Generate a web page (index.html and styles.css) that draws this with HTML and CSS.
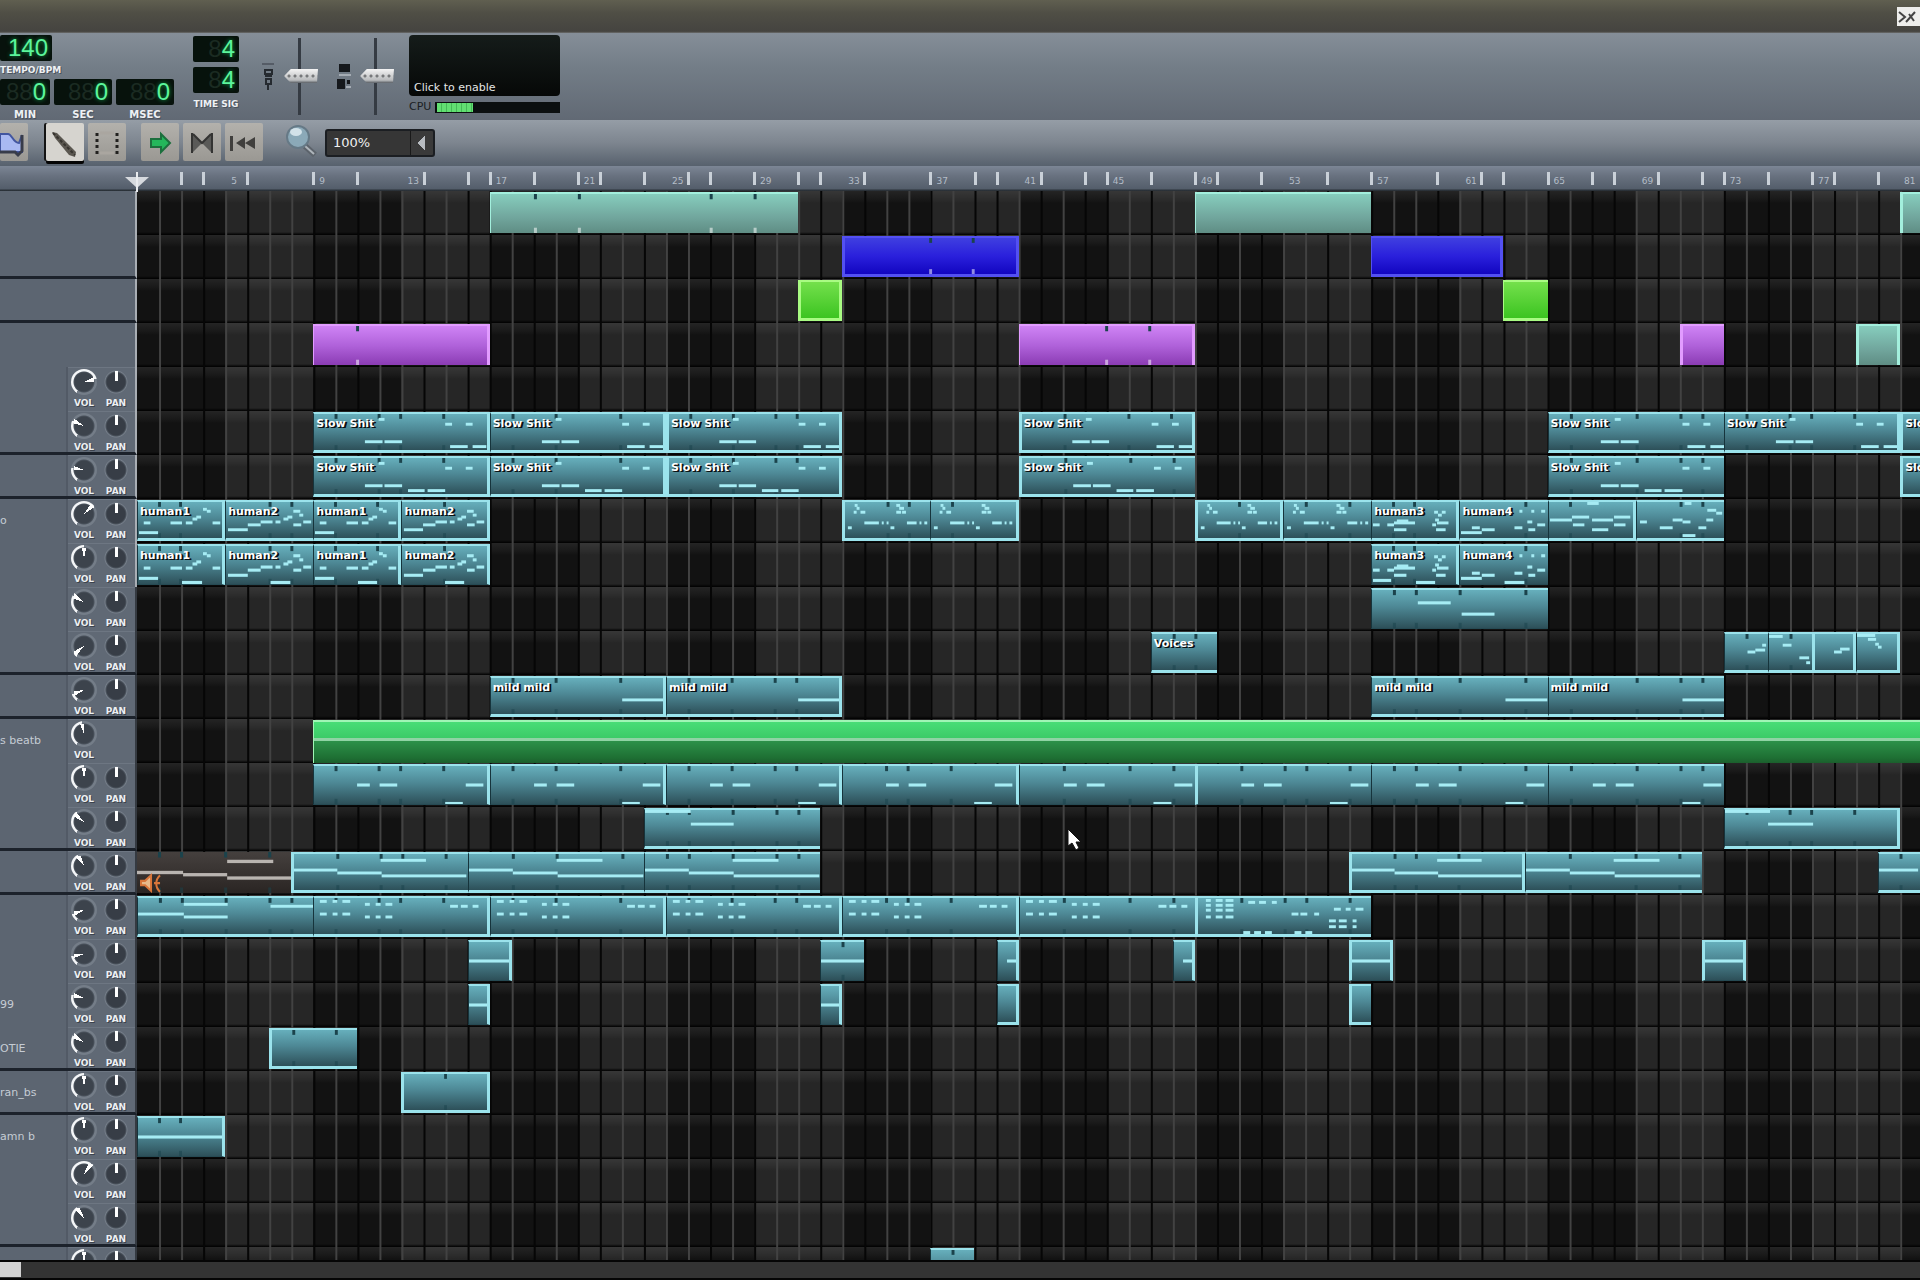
FILE: index.html
```html
<!DOCTYPE html>
<html lang="en">
<head>
<meta charset="utf-8">
<title>Song Editor</title>
<link rel="stylesheet" href="styles.css">
</head>
<body>
<header class="titlebar"><button class="close" aria-label="Close window"><svg width="20" height="14" viewBox="0 0 20 14"><path d="M2 2l6 5-6 5M18 2L9 12M12 4l5 7" fill="none" stroke="#444" stroke-width="2"/></svg></button></header>

<section class="transport" aria-label="Transport">
  <div class="clock">
    <div class="lcd lcd-tempo">140</div>
    <div class="caption caption-tempo">TEMPO/BPM</div>
    <div class="times">
      <div class="time first"><div class="lcd"><i>88</i>0</div><div class="caption">MIN</div></div>
      <div class="time"><div class="lcd"><i>88</i>0</div><div class="caption">SEC</div></div>
      <div class="time"><div class="lcd"><i>88</i>0</div><div class="caption">MSEC</div></div>
    </div>
  </div>
  <div class="signature">
    <div class="lcd"><i>8</i>4</div>
    <div class="lcd"><i>8</i>4</div>
    <div class="caption">TIME SIG</div>
  </div>
  <div class="fader">
    <svg width="20" height="30" viewBox="0 0 20 30"><path d="M3 2h12" stroke="#555c66" stroke-width="2"/><path d="M6 8h7v4H6zM6 14h7M7 17h5v5H7zM9 22v6" fill="none" stroke="#252a30" stroke-width="2"/></svg>
    <input type="range" aria-label="Master volume" value="51">
  </div>
  <div class="fader">
    <svg width="20" height="30" viewBox="0 0 20 30"><path d="M4 2h11v8H4zM2 17h8v10H2zM12 18h3v4h-3z" fill="#15181c"/><path d="M4 13h12M11 25h5" stroke="#a5acb4" stroke-width="2"/></svg>
    <input type="range" aria-label="Master pitch" value="51">
  </div>
  <div class="monitor">
    <button class="scope">Click to enable</button>
    <div class="cpu"><span>CPU</span><div class="load"><b></b></div></div>
  </div>
</section>

<nav class="toolbar" aria-label="Song tools">
  <button class="cut" aria-label="Add automation track"><svg width="28" height="38" viewBox="0 0 28 38"><path d="M0 11h8c4 0 5 9 11 9l3-8v17H0z" fill="#a9b9f2" stroke="#4256a0" stroke-width="2"/><path d="M0 29h15l3 3 4-4V12" fill="none" stroke="#383c4a" stroke-width="3"/></svg></button>
  <div class="group modes">
    <button class="active" aria-label="Draw mode"><svg width="38" height="38" viewBox="0 0 38 38"><path d="M6 9l5 1 19 19-1 5-6-2L9 15z" fill="#5b5750"/><path d="M7 10l22 22" stroke="#37342f" stroke-width="2" stroke-dasharray="3 2"/></svg></button>
    <button aria-label="Edit mode"><svg width="38" height="38" viewBox="0 0 38 38"><path d="M9 10v24M29 10v24" stroke="#22211f" stroke-width="3" stroke-dasharray="3 3"/><path d="M12 10h14M12 30h14" stroke="#aaa6a0" stroke-width="3"/></svg></button>
  </div>
  <div class="group">
    <button aria-label="Auto scrolling"><svg width="38" height="38" viewBox="0 0 38 38"><path d="M10 16h10v-5l9 9-9 9v-5H10z" fill="#24b75b" stroke="#1c6f3d" stroke-width="2"/></svg></button>
    <button aria-label="Loop points"><svg width="38" height="38" viewBox="0 0 38 38"><path d="M9 10l10 10-10 10zM29 10L19 20l10 10z" fill="#5a5a58"/><path d="M9 10v20M29 10v20M10 11l9 9 9-9" fill="none" stroke="#343433" stroke-width="2"/></svg></button>
    <button aria-label="Back to zero"><svg width="38" height="38" viewBox="0 0 38 38"><path d="M5 13h3v15H5zM11 20l9-6v12zM20 20l10-6v12z" fill="#403f3d"/></svg></button>
  </div>
  <label class="zoom"><svg width="36" height="36" viewBox="0 0 36 36"><path d="M22 23l10 9" stroke="#5c636b" stroke-width="6"/><path d="M22 23l9 8" stroke="#aeb5bb" stroke-width="2"/><circle cx="15" cy="14" r="11" fill="#8ba9b8" stroke="#667986" stroke-width="2"/><ellipse cx="13" cy="9" rx="6" ry="4" fill="#d3e2e9"/></svg>
    <select aria-label="Zoom"><option>100%</option></select></label>
</nav>

<main class="song">
  <div class="rulerbar"><div class="corner"></div><div class="ruler" id="ruler"></div></div>
  <div class="tracks" id="tracks"></div>
</main>
<footer class="scrollbar"><div class="thumb"></div></footer>
<script src="song.js"></script>
</body>
</html>
```
FILE: styles.css
```css
* { box-sizing: border-box; }
body {
  margin: 0; height: 100vh; display: flex; flex-direction: column; overflow: hidden;
  background: #080808; color: #e6eaee; font: 10px/12px "DejaVu Sans", sans-serif;
}
button { border: 0; padding: 0; font: inherit; }
.titlebar {
  flex: none; height: 33px; display: flex; justify-content: flex-end; align-items: center;
  background: linear-gradient(#605f50, #4f4e45 40%, #454440 95%, #6d6e6e);
}
.close { width: 23px; height: 19px; background: #eeeeec; display: flex; align-items: center; }

/* transport */
.transport {
  flex: none; height: 87px; display: flex; align-items: flex-start;
  background: linear-gradient(#858e98, #737d87 40%, #616974);
}
.lcd {
  background: #07120c; color: #5cf59b; text-shadow: 0 0 4px #12a54e;
  font: 24px/26px "Liberation Sans", sans-serif; text-align: right; padding: 0 4px;
  height: 26px; border-radius: 2px; white-space: nowrap;
}
.lcd i { font-style: normal; color: #1b2b22; text-shadow: none; }
.caption { font: bold 10px/12px "DejaVu Sans", sans-serif; color: #eef1f4; text-align: center; text-shadow: 1px 1px #4a525c; }
.clock { width: 174px; padding-top: 2px; }
.lcd-tempo { width: 52px; }
.caption-tempo { text-align: left; font-size: 9px; margin: 3px 0; }
.times { display: flex; gap: 4px; }
.time { width: 58px; }
.time.first { width: 50px; }
.time .caption { margin-top: 4px; }
.signature { width: 46px; margin: 3px 20px 0 19px; display: grid; gap: 5px; }
.signature .caption { font-size: 9px; margin: 0 -4px; white-space: nowrap; }
.fader { width: 76px; display: flex; align-items: center; gap: 5px; padding-top: 5px; }
.fader input {
  appearance: none; writing-mode: vertical-lr; direction: rtl; width: 34px; height: 77px; margin: 0;
  background: linear-gradient(90deg, transparent 14px, #353b43 14px 17px, transparent 17px);
}
.fader input::-webkit-slider-thumb {
  appearance: none; width: 34px; height: 14px; border: 0;
  background: radial-gradient(circle, #77797b 1px, transparent 2px) 8px 2px / 6px 10px, linear-gradient(#f4f4f4, #b9bbbd 80%, #595e64);
  clip-path: polygon(0 50%, 20% 0, 100% 0, 97% 100%, 20% 100%);
}
.monitor { width: 151px; padding-top: 2px; margin-left: -2px; }
.scope {
  display: block; width: 100%; height: 61px; padding: 44px 0 0 5px; text-align: left; color: #e4e6e6;
  background: linear-gradient(#151c1a, #060807); border-radius: 4px; font: 11px/14px "DejaVu Sans", sans-serif;
}
.cpu { display: flex; align-items: center; gap: 4px; margin-top: 5px; color: #1a1e23; font: 11px/12px "DejaVu Sans", sans-serif; }
.load { flex: 1; height: 11px; background: #0b0f10; padding: 1px 2px; }
.load b { display: block; width: 36px; height: 9px; background: repeating-linear-gradient(90deg, #62df72 0 4px, #46b958 4px 5px); }

/* song tools */
.toolbar {
  flex: none; height: 46px; padding-top: 3px; display: flex; align-items: flex-start;
  background: linear-gradient(#959da6, #7d858f 50%, #57616d);
}
.toolbar button { width: 38px; height: 38px; background: linear-gradient(#b3b1ac, #9a9893); border-radius: 2px; display: block; }
.toolbar .cut { width: 28px; }
.group { display: flex; gap: 4px; margin-left: 15px; }
.modes { margin-left: 18px; }
.toolbar .active { background: #d6d4cf; box-shadow: -2px 0 #141414, 0 3px #050505; }
.zoom { display: flex; align-items: center; gap: 6px; margin-left: 20px; }
.zoom select {
  appearance: none; width: 110px; height: 28px; padding: 0 6px; border: 2px solid #1b1e22; border-radius: 3px; margin-top: 3px;
  color: #f0f0f0; font: 13px/18px "DejaVu Sans", sans-serif;
  background: linear-gradient(to bottom right, transparent 50%, #b7bbc0 50%) 90px 5px / 8px 7px no-repeat,
    linear-gradient(to top right, transparent 50%, #b7bbc0 50%) 90px 12px / 8px 7px no-repeat,
    linear-gradient(90deg, #363636 0 83px, #191919 83px 84px, #3a3a3a 84px);
}

/* arrangement */
.song { flex: 1; min-height: 0; display: flex; flex-direction: column; overflow: hidden; }
.rulerbar { flex: none; height: 25px; display: flex; background: linear-gradient(#7c8695, #68717f 40%, #545e6b 90%, #20262c); }
.corner { flex: none; width: 137px; }
.ruler { flex: 1; position: relative; }
.tick { position: absolute; top: 6px; width: 3px; height: 13px; margin-left: -1px; background: #c9d0d8; }
.bar { position: absolute; top: 9px; padding-left: 6px; font: 9px/12px "DejaVu Sans", sans-serif; color: #b4bdc8; }
.playhead { position: absolute; left: -12px; top: 6px; z-index: 2; }
.tracks { flex: 1; min-height: 0; position: relative; overflow: hidden; }
.track { height: 44px; display: flex; }
.head { flex: none; width: 137px; height: 44px; display: flex; background: #5c6571; border-right: 2px solid #353a41; overflow: hidden; }
.lit .head { border-right-color: #a9aeb4; }
.last .head { border-bottom: 3px solid #1c222b; }
.name { width: 66px; padding-top: 15px; color: #c5ccd4; font: 11px/14px "DejaVu Sans", sans-serif; white-space: nowrap; overflow: hidden; }
.knobs { flex: 1; border-left: 2px solid #525a66; padding: 2px 0 0 3px; display: flex; gap: 6px; background: #606975; box-shadow: inset 0 1px #6d7682; }
.knob { width: 26px; height: 42px; color: #eceff2; font: bold 9px/12px "DejaVu Sans", sans-serif; text-align: center; text-shadow: 1px 1px #3b424c; }
.knob input {
  appearance: none; display: block; width: 26px; height: 26px; margin: 0 0 2px; border-radius: 50%;
  background:
    conic-gradient(from calc(var(--turn) - 12deg), #fff 24deg, transparent 24deg) center / 20px 20px no-repeat,
    radial-gradient(circle, #3c434c 9px, #4a525c 10px, transparent 11px),
    conic-gradient(from 215deg, #f4f6f8 var(--arc), transparent 0),
    #747d88;
}
.knob input::-webkit-slider-thumb { appearance: none; width: 0; height: 0; }
.knob.pan input { background:
    linear-gradient(#fff, #fff) 12px 2px / 3px 10px no-repeat,
    radial-gradient(circle, #373d46 9px, #4a525c 10px, #757e89 11px, transparent 12px); }
.lane {
  flex: 1; position: relative;
  background:
    linear-gradient(#ffffff14, #ffffff08 8px, transparent 12px, transparent 41px, #000 44px),
    repeating-linear-gradient(90deg, #121212 0 calc(400% / 80.9), #262626 calc(400% / 80.9) calc(800% / 80.9));
}
.grid { position: absolute; left: 137px; top: 0; width: calc(100% - 137px); height: 100%; pointer-events: none; }
.clip {
  position: absolute; z-index: 1; top: 1px; height: 41px; overflow: hidden;
  border: solid #9be3ec; border-width: 2px 0 3px; border-left: 1px solid #16343c;
  background: linear-gradient(#66afbc, #4d8794 45%, #2d5059);
}
.clip.edge { border-right: 3px solid #9be3ec; }
.clip.start { border-left: 3px solid #9be3ec; }
.clip.open { border-bottom: 1px solid #264a53; }
.clip svg { position: absolute; left: 0; top: 0; width: 100%; height: 100%; }
.clip span {
  position: relative; display: block; padding: 3px 0 0 2px; white-space: nowrap; color: #fff;
  font: bold 11px/14px "DejaVu Sans", sans-serif; text-shadow: 1px 1px #0a1114, 2px 1px #0a1114;
}
.clip.mint { background: linear-gradient(#86cdbd, #71a69d 60%, #5f8d84); border-color: #a3efdd; border-bottom-width: 0; }
.clip.blue { background: linear-gradient(#3f3fe0, #2a20dc 50%, #1205c0); border-color: #5350f2; }
.clip.lime { background: linear-gradient(#74e04c, #3cc421); border-color: #a9fb83; }
.clip.purple { background: linear-gradient(#cf83f5, #b062da 50%, #8b3cb4); border-color: #e29cff; border-bottom-width: 0; }
.clip.green { top: 1px; height: 43px; background: linear-gradient(#49dd77, #3bcb67 16px, #8fd3a4 16px 19px, #2c9149 19px, #1e6f33 36px, #1b5f2d); border-color: #a1f5b6; border-bottom: 0; }
.clip.muted { background: linear-gradient(#45403e, #2a2523); border: 0; }
.cursor { position: absolute; z-index: 3; }

.scrollbar { flex: none; height: 20px; background: #333; border: solid #050505; border-width: 2px 0; }
.thumb { width: 21px; height: 15px; background: #d2d2d2; }
```
FILE: song.js
```js
// Number of bars that fit across the lanes.
const BARS = 80.9;
const BAR_PX = 22;
const LIGHT = [1,2,4,6,7,9,11,12,14,17,19,22,24,25,27,29,30,32,34,35,37,40,42,45,47,48,50,52,53,55,57,58,60,63,65,68,70,71,73,75,76,78,80];
const TICKS = [2,3,5,8,10,13,15,16,18,20,21,23,25,26,28,30,31,33,36,38,39,41,43,44,46,48,49,51,54,56,59,61,62,64,66,67,69,71,72,74,76,77,79];
const pct = bars => (bars / BARS * 100).toFixed(3) + '%';

// Notes are [x, width, y] inside the clip.
const SLOW = [[66,6,4],[52,18,27],[72,18,27],[134,7,9],[155,7,9]];
const SLOW_A = [...SLOW,[139,18,32],[162,14,32]];
const SLOW_B = [...SLOW,[96,17,32],[116,18,32]];
const H1 = [[1,20,30],[6,7,20],[34,12,20],[50,7,20],[78,8,20],[57,5,16],[61,5,14],[68,4,6],[72,4,8]];
const H2 = [[2,20,27],[22,13,22],[35,12,19],[50,5,19],[58,5,16],[62,5,14],[68,7,8],[74,4,12],[68,8,22],[78,8,19]];
const H3 = [[1,7,22],[16,7,22],[23,22,20],[26,12,18],[23,13,27],[65,4,9],[69,4,12],[73,4,9],[63,4,22],[68,12,20],[66,4,17],[67,10,27]];
const H4 = [[1,21,30],[12,8,25],[22,13,27],[55,8,25],[68,5,19],[69,7,27],[78,8,22],[60,3,8],[72,3,8],[82,4,8]];
const DOTS = [[9,3,9],[16,5,9],[12,3,5],[10,3,2],[20,15,20],[38,2,20],[43,2,20],[47,4,25],[53,5,9],[59,4,9],[56,5,5],[53,4,2],[64,10,20],[77,2,20],[82,3,20],[3,4,25]];
const BEND = [[0,44,15],[44,45,18],[89,86,21],[88,46,5]];
const BASS = [[44,13,17],[67,18,17],[155,18,17],[134,18,35]];
const CHOP = [];
for (const y of [2,15]) CHOP.push([6,7,y],[19,5,y],[29,8,y]);
for (const y of [5,18]) CHOP.push([52,5,y],[63,5,y],[73,7,y]);
CHOP.push([139,8,7],[150,7,7],[162,6,7]);
const FILL = [];
for (const y of [1,6,11,18]) FILL.push([8,5,y],[18,7,y],[28,8,y]);
FILL.push([51,7,3],[62,7,3],[75,5,3],[95,7,15],[104,7,15],[118,5,15],[138,7,10],[150,5,10],[160,8,10]);
for (const y of [22,28]) FILL.push([133,7,y],[143,8,y],[157,4,y]);
for (const x of [46,57,68,98,109]) FILL.push([x,7,34]);
const MID = [[0,400,17]];

const S = 'Slow Shit';
// Clips are [start, end, classes, name, notes], one list for each track.
const tracks = [
  { clips: [[16,30,'mint','',[]],[48,56,'mint','',[]],[80,84,'mint start','',[]]] },
  { last: 1, clips: [[32,40,'blue start edge','',[]],[56,62,'blue edge','',[]]] },
  { last: 1, clips: [[30,32,'lime start edge','',[]],[62,64,'lime','',[]]] },
  { clips: [[8,16,'purple edge','',[]],[40,48,'purple edge','',[]],[70,72,'purple start','',[]],[78,80,'mint start edge','',[]]] },
  { knob: 75, clips: [] },
  { knob: -65, last: 1, clips: [[8,16,'edge',S,SLOW_A],[16,24,'edge',S,SLOW_A],[24,32,'start edge',S,SLOW_A],[40,48,'start edge',S,SLOW_A],[64,72,'',S,SLOW_A],[72,80,'edge',S,SLOW_A],[80,88,'start',S,[]]] },
  { knob: -80, last: 1, clips: [[8,16,'edge',S,SLOW_B],[16,24,'edge',S,SLOW_B],[24,32,'start edge',S,SLOW_B],[40,48,'start',S,SLOW_B],[64,72,'',S,SLOW_B],[80,88,'start',S,[]]] },
  { knob: 45, name: 'o', clips: [[0,4,'edge','human1',H1],[4,8,'','human2',H2],[8,12,'edge','human1',H1],[12,16,'edge','human2',H2],[32,36,'start','',DOTS],[36,40,'edge','',DOTS],[48,52,'start edge','',DOTS],[52,56,'','',DOTS],[56,60,'edge','human3',H3],[60,64,'','human4',H4],
    [64,68,'edge','',[[1,23,17],[24,18,14],[25,12,22],[45,22,17],[45,17,27],[68,17,14],[68,12,22],[40,12,0]]],
    [68,72,'','',[[3,7,19],[23,13,25],[36,10,17],[46,8,19],[46,13,33],[62,8,25],[70,7,17],[71,9,7],[80,6,10],[48,7,0]]]] },
  { knob: 0, clips: [[0,4,'open edge','human1',[...H1,[46,21,34]]],[4,8,'open','human2',[...H2,[45,20,34]]],[8,12,'open edge','human1',[...H1,[46,20,34]]],[12,16,'open edge','human2',[...H2,[45,20,34]]],[56,60,'open edge','human3',[...H3,[1,19,32],[46,20,34]]],[60,64,'open','human4',[...H4,[45,20,34]]]] },
  { knob: -60, clips: [[56,64,'open','',[[46,33,11],[90,33,22]]]] },
  { knob: -130, last: 1, clips: [[46,49,'','Voices',[]],
    [72,74,'','',[[23,8,17],[31,10,15],[38,4,10]]],[74,76,'','',[[0,14,1],[14,9,10],[31,10,23],[38,4,28]]],
    [76,78,'start edge','',[[22,9,17],[29,11,14]]],[78,80,'edge','',[[0,20,0],[12,9,4],[20,4,9],[23,4,12]]]] },
  { knob: -110, last: 1, clips: [[16,24,'edge','mild mild',[[134,42,21]]],[24,32,'edge','mild mild',[[134,42,21]]],[56,64,'','mild mild',[[134,42,21]]],[64,72,'','mild mild',[[134,42,21]]]] },
  { knob: -10, nopan: 1, name: 's beatb', clips: [[8,84,'green','',[]]] },
  { knob: 0, clips: [8,16,24,32,40,48,56,64].map((s, i) => [s, s + 8, 'open' + (i < 4 ? ' edge' : '') + (i === 5 ? ' start' : ''), '', BASS]) },
  { knob: -50, last: 1, clips: [[23,31,'','',[[0,46,0],[46,43,13]]],[72,80,'edge','',[[0,46,0],[44,46,13]]]] },
  { knob: -30, last: 1, clips: [[0,7,'muted','',[[0,46,17],[46,44,19],[90,64,22],[90,46,7]]],[7,15,'start','',BEND],[15,23,'','',BEND],[23,31,'','',BEND],[55,63,'start edge','',BEND],[63,71,'','',BEND],[79,87,'','',[[0,40,15]]]] },
  { knob: -110, clips: [[0,8,'','',[[0,46,15],[46,44,18],[46,44,5],[133,43,7]]],[8,16,'edge','',CHOP],[16,24,'edge','',CHOP],[24,32,'edge','',CHOP],[32,40,'edge','',CHOP],[40,48,'','',CHOP],[48,56,'start','',FILL]] },
  { knob: -100, clips: [[15,17,'open edge','',MID],[31,33,'open','',MID],[39,40,'open edge','',[[11,12,17]]],[47,48,'open edge','',[[11,12,17]]],[55,57,'open start edge','',MID],[71,73,'open start edge','',MID]] },
  { knob: -75, name: '99', clips: [[15,16,'open edge','',MID],[31,32,'open edge','',MID],[39,40,'edge','',[]],[55,56,'start','',[]]] },
  { knob: -60, name: 'OTIE', last: 1, clips: [[6,10,'start','',[]]] },
  { knob: 0, name: 'ran_bs', last: 1, clips: [[12,16,'start edge','',[]]] },
  { knob: 0, name: 'amn b', clips: [[0,4,'open edge','',MID]] },
  { knob: 35, clips: [] },
  { knob: -35, last: 1, clips: [] },
  { knob: 0, clips: [[36,38,'','',[]]] }
];

function clipMarkup([start, end, cls, name, notes]) {
  const width = (end - start) * BAR_PX;
  const fill = cls.includes('muted') ? '#b9b4b0' : '#a6ecf4';
  const plain = cls.includes('lime') || cls.includes('green');
  const wide = /mint|purple|blue/.test(cls);
  const marks = plain ? [] : wide ? [10,18,20,26,28,36,38,44,46].filter(b => end - start > 2) : LIGHT;
  let svg = '';
  for (const b of marks) {
    if (b <= start || b >= end) continue;
    const x = (b - start) * BAR_PX - 1;
    svg += `<rect x="${x}" y="0" width="3" height="5" fill="#1b434c"/><rect x="${x}" y="32" width="3" height="5" fill="${wide ? '#ffffff88' : '#1b434c88'}"/>`;
  }
  for (const [x, w, y] of notes) svg += `<rect x="${x}" y="${y}" width="${w}" height="3" fill="${fill}"/>`;
  if (cls.includes('muted')) svg += '<g fill="none" stroke="#d8753a" stroke-width="2"><path d="M4 26h4l6-5v14l-6-5H4z" fill="#e8b98a"/><path d="M23 21c-5 4-5 11 0 15M17 28h6"/></g>';
  return `<div class="clip ${cls}" style="left:${pct(start)};width:${pct(Math.min(end, BARS) - start)}"><svg viewBox="0 0 ${(Math.min(end, BARS) - start) * BAR_PX} 37" preserveAspectRatio="none">${svg}</svg>${name ? `<span>${name}</span>` : ''}</div>`;
}

function knobMarkup(angle, label) {
  const pan = label === 'PAN';
  return `<label class="knob${pan ? ' pan' : ''}"><input type="range" min="-145" max="145" value="${angle}" style="--turn:${angle}deg;--arc:${angle + 145}deg">${label}</label>`;
}

document.getElementById('tracks').innerHTML = tracks.map((t, i) => {
  const knobs = t.knob === undefined ? '' : `<div class="knobs">${knobMarkup(t.knob, 'VOL')}${t.nopan ? '' : knobMarkup(0, 'PAN')}</div>`;
  return `<div class="track${t.last ? ' last' : ''}${i < 9 ? ' lit' : ''}"><div class="head"><div class="name">${t.name || ''}</div>${knobs}</div><div class="lane">${t.clips.map(clipMarkup).join('')}</div></div>`;
}).join('') + '<svg class="grid">' +
  Array.from({ length: 80 }, (_, i) => i + 1).map(b => {
    const light = LIGHT.includes(b);
    return `<rect x="${pct(b)}" y="0" width="2" height="100%" fill="${light ? '#424242' : '#060606'}"/>`;
  }).join('') +
  '</svg><svg class="cursor" style="left:calc(137px + (100% - 137px) * 0.5216);top:637px" width="16" height="24" viewBox="0 0 16 24"><path d="M1 1v17l4-3 4 7 3-2-3-6h5z" fill="#fff" stroke="#111" stroke-width="1"/></svg>';

let ruler = TICKS.map(b => `<div class="tick" style="left:${pct(b)}"></div>`).join('');
for (let b = 4; b <= 76; b += 4) ruler += `<div class="bar" style="left:${pct(b)}">${b + 1}</div>`;
ruler += `<div class="bar" style="left:${pct(79.9)}">81</div>`;
ruler += '<svg class="playhead" width="24" height="20" viewBox="0 0 24 20"><path d="M0 5h24L12 16z" fill="#d6d9de"/><path d="M12 0v20" stroke="#e9ebee" stroke-width="2"/></svg>';
document.getElementById('ruler').innerHTML = ruler;
```
